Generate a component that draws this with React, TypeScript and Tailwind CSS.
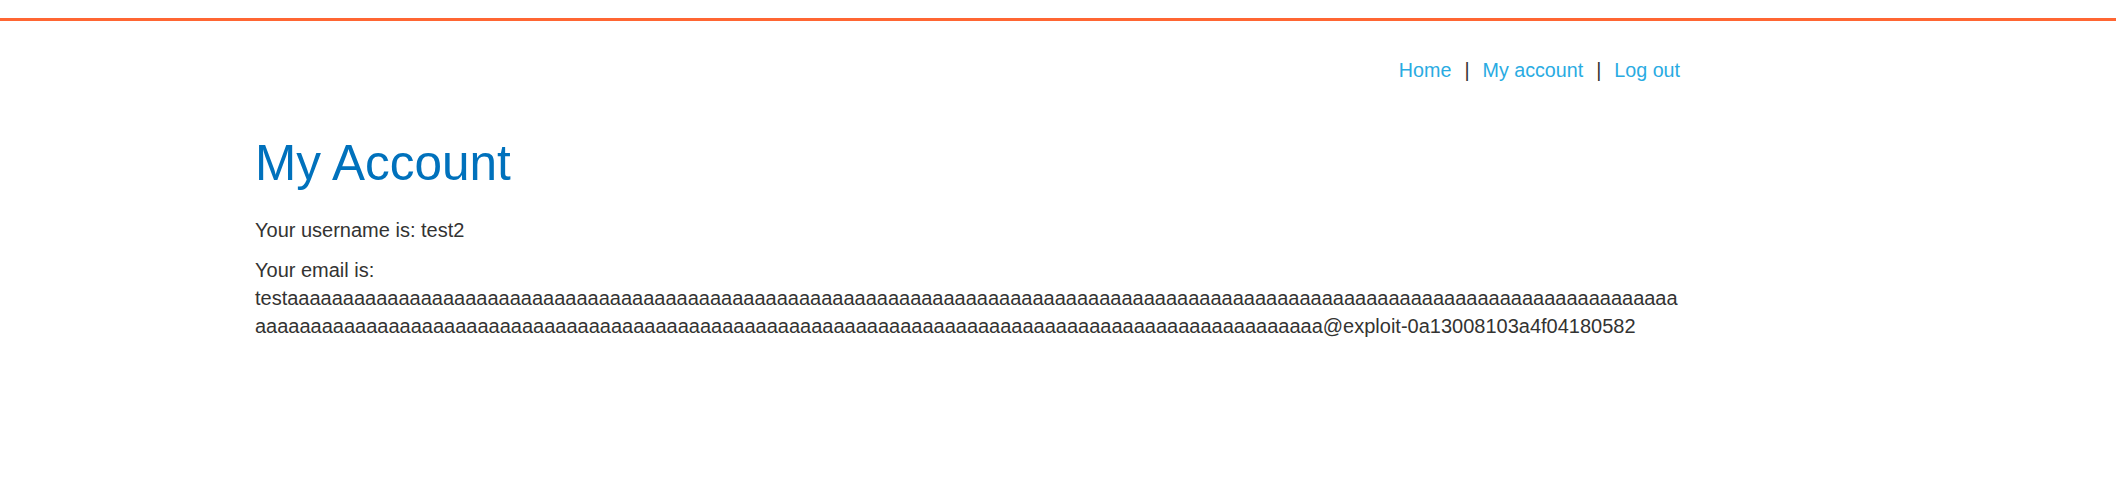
const links = ["Home", "My account", "Log out"];

const email =
  "test" + "a".repeat(221) + "@exploit-0a13008103a4f04180582";

export default function App() {
  return (
    <div className="min-h-[486px] bg-white font-['Liberation_Sans',Arial,sans-serif] text-[#333332]">
      <div className="h-[18px]" />
      <div className="h-[3px] bg-[#ff6633]" />
      <div className="ml-[255px] w-[1425px]">
        <section className="mt-[37px] flex items-center justify-end text-[19.7px] leading-[24px]">
          {links.map((label, i) => (
            <span className="flex items-center" key={label}>
              {i > 0 && <span className="mx-[13px] text-[#333332]">|</span>}
              <a className="text-[#29abe2]" href="#">
                {label}
              </a>
            </span>
          ))}
        </section>
        <h1 className="mt-[56px] text-[49.5px] leading-[49px] text-[#0071bc]">My Account</h1>
        <div className="mt-[29px] text-[20px] leading-[28px]">
          <p>Your username is: test2</p>
          <p className="mt-[12px] break-words">
            Your email is: {email}
          </p>
        </div>
      </div>
    </div>
  );
}
